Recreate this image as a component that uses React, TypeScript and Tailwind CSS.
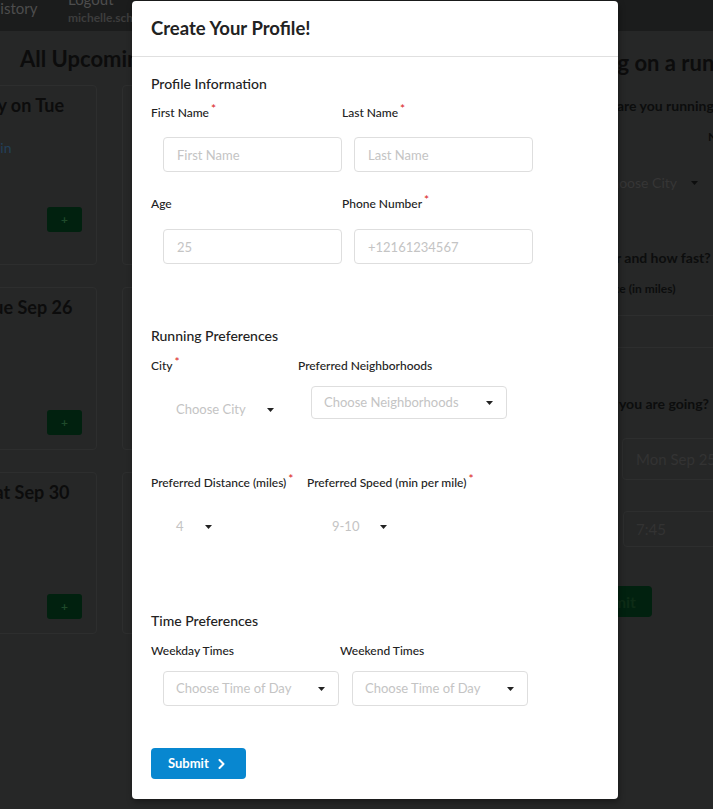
import React from 'react';

const Caret: React.FC = () => (
  <svg width="7" height="4" viewBox="0 0 7 4" className="shrink-0">
    <path d="M0 0h7L3.5 4z" fill="#222" />
  </svg>
);

const Label: React.FC<{ children: React.ReactNode; required?: boolean }> = ({ children, required }) => (
  <div className="text-[12px] leading-[16px] font-medium text-[#222] whitespace-nowrap">
    {children}
    {required && <span className="relative top-[-4px] ml-[2px] text-[#db2828]">*</span>}
  </div>
);

const TextInput: React.FC<{ placeholder: string; className?: string }> = ({ placeholder, className }) => (
  <input
    type="text"
    placeholder={placeholder}
    className={`ml-[12px] block h-[35px] w-[179px] rounded-[4px] border border-[#dedede] pl-[13px] text-[13px] text-[#222] outline-none placeholder:text-[#c4c4c4] ${className || ''}`}
  />
);

const PlainDropdown: React.FC<{ text: string; className?: string }> = ({ text, className }) => (
  <div className={`ml-[12px] inline-flex h-[33px] items-center gap-[21px] px-[13px] text-[13px] text-[#c4c4c4] ${className || ''}`}>
    <span>{text}</span>
    <Caret />
  </div>
);

const BoxDropdown: React.FC<{ text: string; className?: string }> = ({ text, className }) => (
  <div
    className={`flex items-center justify-between rounded-[4px] border border-[#dedede] pl-[12px] pr-[13px] text-[13px] text-[#c4c4c4] ${className || ''}`}
  >
    <span>{text}</span>
    <Caret />
  </div>
);

const RunCard: React.FC<{ title: string; detail?: string; className?: string }> = ({ title, detail, className }) => (
  <div className={`flex flex-col rounded-[4px] border border-[#2d2e2e] px-[14px] pt-[8px] ${className || ''}`}>
    <div className="text-[18px] leading-[22px] font-bold text-[#0c0c0c]">{title}</div>
    {detail && <div className="mt-[2px] ml-[3px] text-[14px] leading-[16px] text-[#23405a]">{detail}</div>}
    <div className="mt-auto flex h-[25px] w-[35px] items-center justify-center self-end rounded-[3px] bg-[#01210f] text-[12px] font-bold text-[#1f4a2b]">
      +
    </div>
  </div>
);

const App: React.FC = () => {
  return (
    <div className="relative h-[809px] w-full overflow-hidden bg-[#262727] font-[Lato,sans-serif]">
      {/* Navbar (dimmed) */}
      <div className="flex h-[31px] items-start overflow-hidden bg-[#1b1c1c]">
        <div className="ml-[-11px] w-[79px] shrink-0 text-[15px] leading-[16px] text-[#4d4d4d]">History</div>
        <div className="flex flex-col">
          <div className="mt-[-9px] text-[15px] leading-[16px] text-[#4d4d4d]">Logout</div>
          <div className="mt-[4px] text-[12px] leading-[14px] font-bold text-[#3d3d3d]">michelle.schafer@gmail.com</div>
        </div>
      </div>

      {/* Page behind the modal */}
      <div className="flex">
        <div className="w-[559px] shrink-0">
          <h1 className="mt-[14px] pl-[20px] text-[22px] leading-[28px] font-bold text-[#0c0c0c]">All Upcoming Runs</h1>
          <div className="mt-[12px] ml-[-91px] grid grid-cols-[188px_188px_188px] gap-x-[25px] gap-y-[22px]">
            <RunCard title="Run Today on Tue Sep 25" detail="4 miles, 9 min" className="h-[180px] pb-[32px]" />
            <RunCard title="Run with Sam" className="h-[180px] pb-[32px]" />
            <RunCard title="Run with Ann" className="h-[180px] pb-[32px]" />
            <RunCard title="Run on Tue Sep 26" className="h-[163px] pb-[14px]" />
            <RunCard title="Run with Joe" className="h-[163px] pb-[14px]" />
            <RunCard title="Run with Kim" className="h-[163px] pb-[14px]" />
            <RunCard title="Run on Sat Sep 30" className="h-[162px] pb-[14px]" />
            <RunCard title="Run with Lee" className="h-[162px] pb-[14px]" />
            <RunCard title="Run with Max" className="h-[162px] pb-[14px]" />
          </div>
        </div>

        <div className="flex min-w-0 flex-1 flex-col">
          <h1 className="mt-[18px] ml-[12px] whitespace-nowrap text-[22px] leading-[28px] font-bold text-[#0c0c0c]">
            Going on a run?
          </h1>
          <div className="mt-[19px] ml-[12px] whitespace-nowrap text-[14px] leading-[20px] font-bold text-[#0c0d0d]">
            Where are you running?
          </div>
          <div className="mt-[13px] flex whitespace-nowrap text-[12px] leading-[16px] font-bold text-[#0c0d0d]">
            <div className="w-[149px] shrink-0">City</div>
            <div>Neighborhoods</div>
          </div>
          <div className="mt-[21px] ml-[30px] flex h-[33px] items-center gap-[14px] px-[13px] text-[14px] whitespace-nowrap text-[#363636]">
            <span>Choose City</span>
            <svg width="7" height="4" viewBox="0 0 7 4" className="shrink-0">
              <path d="M0 0h7L3.5 4z" fill="#0c0d0d" />
            </svg>
          </div>
          <div className="mt-[49px] ml-[12px] whitespace-nowrap text-[14px] leading-[20px] font-bold text-[#0c0d0d]">
            How far and how fast?
          </div>
          <div className="mt-[13px] ml-[20px] whitespace-nowrap text-[12px] leading-[16px] font-bold text-[#0c0d0d]">
            Distance (in miles)
          </div>
          <div className="mt-[18px] h-[33px] w-[300px] shrink-0 rounded-[4px] border border-[#2d2e2e]" />
          <div className="mt-[46px] ml-[19px] whitespace-nowrap text-[14px] leading-[20px] font-bold text-[#0c0d0d]">
            When you are going?
          </div>
          <div className="mt-[24px] ml-[63px] flex h-[42px] w-[200px] shrink-0 items-center rounded-[4px] border border-[#2d2e2e] pl-[13px] text-[15px] whitespace-nowrap text-[#333]">
            Mon Sep 25 2017
          </div>
          <div className="mt-[31px] ml-[64px] flex h-[36px] w-[200px] shrink-0 items-center rounded-[4px] border border-[#2d2e2e] pl-[12px] text-[15px] text-[#333]">
            7:45
          </div>
          <div className="mt-[39px] ml-[5px] flex h-[31px] w-[88px] shrink-0 items-center justify-center rounded-[4px] bg-[#01210f] pl-[6px] text-[16px] font-bold text-[#0d2c16]">
            Submit
          </div>
        </div>
      </div>

      {/* Modal */}
      <div className="absolute top-[1px] left-[132px] flex h-[798px] w-[486px] flex-col rounded-[4px] bg-white shadow-[1px_3px_6px_rgba(0,0,0,0.35)]">
        <div className="flex h-[56px] shrink-0 items-center border-b border-[#e0e0e0] px-[19px]">
          <h2 className="text-[18.5px] font-bold text-[#222]">Create Your Profile!</h2>
        </div>

        <div className="flex flex-col px-[19px] pt-[17px] pb-[20px]">
          <h3 className="text-[14px] leading-[20px] font-medium text-[#222]">Profile Information</h3>

          <div className="mt-[11px] grid grid-cols-[191px_1fr]">
            <div>
              <Label required>First Name</Label>
              <TextInput placeholder="First Name" className="mt-[16px]" />
            </div>
            <div>
              <Label required>Last Name</Label>
              <TextInput placeholder="Last Name" className="mt-[16px]" />
            </div>
          </div>

          <div className="mt-[24px] grid grid-cols-[191px_1fr]">
            <div>
              <Label>Age</Label>
              <TextInput placeholder="25" className="mt-[17px]" />
            </div>
            <div>
              <Label required>Phone Number</Label>
              <TextInput placeholder="+12161234567" className="mt-[17px]" />
            </div>
          </div>

          <h3 className="mt-[62px] text-[14px] leading-[20px] font-medium text-[#222]">Running Preferences</h3>

          <div className="mt-[12px] grid grid-cols-[147px_1fr]">
            <div>
              <Label required>City</Label>
              <PlainDropdown text="Choose City" className="mt-[19px]" />
            </div>
            <div>
              <Label>Preferred Neighborhoods</Label>
              <BoxDropdown text="Choose Neighborhoods" className="mt-[12px] ml-[13px] h-[33px] w-[196px]" />
            </div>
          </div>

          <div className="mt-[49px] grid grid-cols-[156px_1fr]">
            <div>
              <Label required>Preferred Distance (miles)</Label>
              <PlainDropdown text="4" className="mt-[19px]" />
            </div>
            <div>
              <Label required>Preferred Speed (min per mile)</Label>
              <PlainDropdown text="9-10" className="mt-[19px]" />
            </div>
          </div>

          <h3 className="mt-[68px] text-[14px] leading-[20px] font-medium text-[#222]">Time Preferences</h3>

          <div className="mt-[12px] grid grid-cols-[189px_1fr]">
            <div>
              <Label>Weekday Times</Label>
              <BoxDropdown text="Choose Time of Day" className="mt-[12px] ml-[12px] h-[35px] w-[176px]" />
            </div>
            <div>
              <Label>Weekend Times</Label>
              <BoxDropdown text="Choose Time of Day" className="mt-[12px] ml-[12px] h-[35px] w-[176px]" />
            </div>
          </div>

          <button className="mt-[42px] flex h-[31px] w-[95px] items-center gap-[9px] rounded-[4px] bg-[#0887d0] pl-[17px] text-[13px] font-bold text-white">
            Submit
            <svg width="7" height="10" viewBox="0 0 7 10">
              <path d="M1.5 1l4 4-4 4" fill="none" stroke="white" strokeWidth="2" strokeLinecap="round" strokeLinejoin="round" />
            </svg>
          </button>
        </div>
      </div>
    </div>
  );
};

export default App;
